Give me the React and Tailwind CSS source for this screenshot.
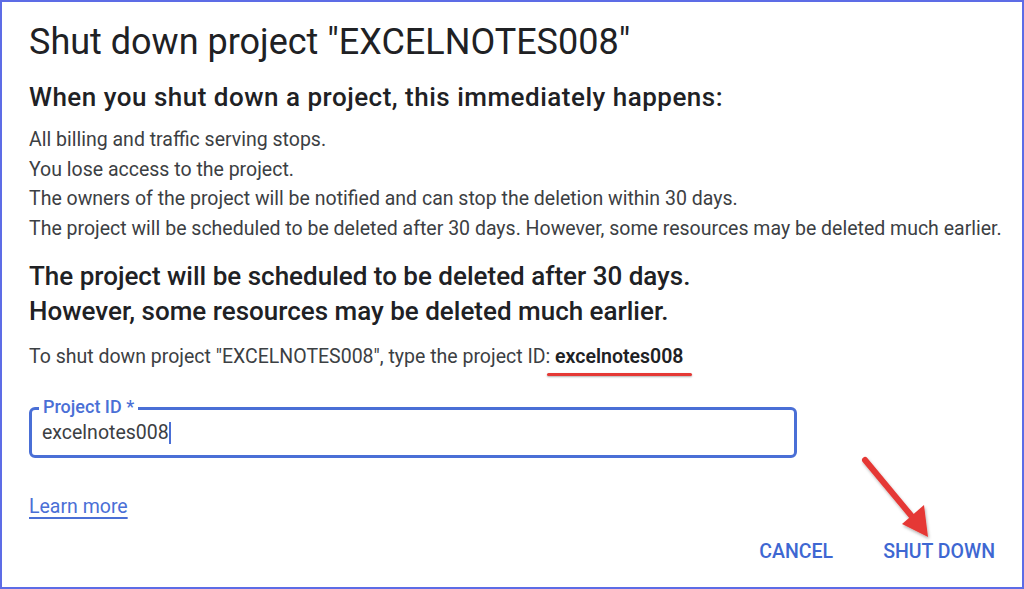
export default function App() {
    return (
        <div className="relative w-[1024px] h-[589px] overflow-hidden border-2 border-[#5d6ce6] bg-white pl-[27px] pr-[20px] font-['Roboto',sans-serif] text-[#202124]">
            {/* Title */}
            <h1 className="mt-[20px] text-[36px] leading-[40px] font-normal">
                Shut down project "EXCELNOTES008"
            </h1>

            {/* Subheading */}
            <h2 className="mt-[20px] text-[26px] leading-[30px] font-medium tracking-[0.5px]">
                When you shut down a project, this immediately happens:
            </h2>

            {/* What happens */}
            <ul className="mt-[13px] text-[19.5px] leading-[29.7px] text-[#3c4043]">
                <li>All billing and traffic serving stops.</li>
                <li>You lose access to the project.</li>
                <li>The owners of the project will be notified and can stop the deletion within 30 days.</li>
                <li>The project will be scheduled to be deleted after 30 days. However, some resources may be deleted much earlier.</li>
            </ul>

            {/* Warning */}
            <p className="mt-[15px] text-[26px] leading-[35px] font-medium">
                The project will be scheduled to be deleted after 30 days.
                <br />
                However, some resources may be deleted much earlier.
            </p>

            {/* Confirm hint */}
            <p className="mt-[16px] text-[19.5px] leading-[24px] text-[#3c4043]">
                To shut down project "EXCELNOTES008", type the project ID:{" "}
                <span className="relative font-semibold text-[#202124]">
                    excelnotes008
                    <span className="absolute left-[-8px] right-[-9px] top-[28px] h-[3px] rounded-full bg-[#e53935] shadow-[0_1px_2px_rgba(0,0,0,0.3)]"></span>
                </span>
            </p>

            {/* Project ID field */}
            <div className="relative mt-[38px] w-[768px] h-[51px] rounded-[6px] border-[3px] border-[#4a6fd6] flex items-center pl-[10px]">
                <span className="absolute left-[7px] top-[-14px] bg-white px-[4px] text-[18px] leading-[22px] font-medium text-[#4a6fd6]">
                    Project ID *
                </span>
                <span className="text-[19.5px] leading-[24px] text-[#3c4043] mt-[2px]">excelnotes008</span>
                <span className="w-[2px] h-[22px] bg-[#4a6fd6] mt-[2px]"></span>
            </div>

            {/* Learn more */}
            <div className="mt-[37px] text-[19.5px] leading-[24px]">
                <a className="text-[#4a6fd6] underline underline-offset-[4px] decoration-[2px]">Learn more</a>
            </div>

            {/* Actions */}
            <div className="mt-[21px] flex justify-end gap-[50px] pr-[7px] text-[19.5px] leading-[24px] font-medium text-[#3e67d2]">
                <button>CANCEL</button>
                <button>SHUT DOWN</button>
            </div>

            {/* Red annotation arrow */}
            <svg className="absolute left-[850px] top-[445px]" width="100" height="100" viewBox="0 0 100 100">
                <defs>
                    <filter id="sh" x="-20%" y="-20%" width="140%" height="140%">
                        <feDropShadow dx="1" dy="2" stdDeviation="1.5" floodColor="#000" floodOpacity="0.3" />
                    </filter>
                </defs>
                <g filter="url(#sh)">
                    <line x1="13" y1="13" x2="62" y2="72" stroke="#e53935" strokeWidth="6" strokeLinecap="round" />
                    <polygon points="76,90 50,77 72,58" fill="#e53935" />
                </g>
            </svg>
        </div>
    );
}
